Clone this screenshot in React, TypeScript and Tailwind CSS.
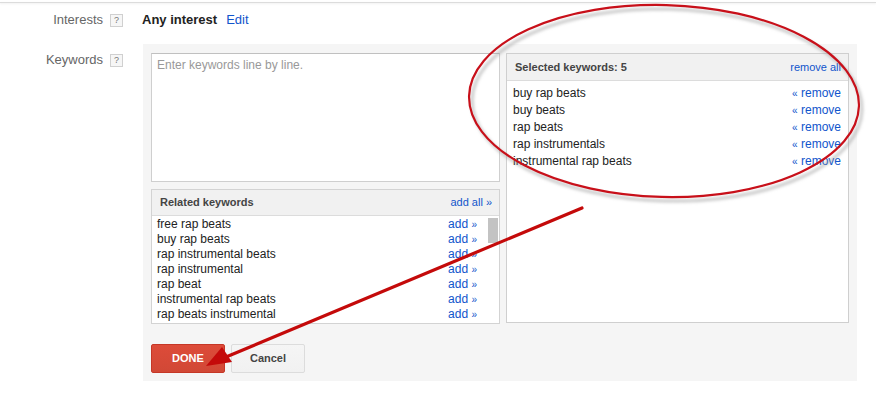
import React from "react";

const related = [
  "free rap beats",
  "buy rap beats",
  "rap instrumental beats",
  "rap instrumental",
  "rap beat",
  "instrumental rap beats",
  "rap beats instrumental",
  "rap beats for sale",
];

const selected = [
  "buy rap beats",
  "buy beats",
  "rap beats",
  "rap instrumentals",
  "instrumental rap beats",
];

function Help() {
  return (
    <div className="ml-[7px] flex h-[13px] w-[13px] items-center justify-center border border-[#d0d0d0] bg-[#f6f6f6] text-[9px] leading-none text-[#777]">
      ?
    </div>
  );
}

export default function App() {
  return (
    <div className="relative h-[399px] w-[876px] overflow-hidden bg-white font-['Liberation_Sans',Arial,sans-serif] text-[#222]">
      <div className="h-[2px]" />
      <div className="h-px bg-[#dcdcdc] shadow-[0_1px_2px_rgba(0,0,0,0.08)]" />

      {/* Interests row */}
      <div className="mt-[9px] flex h-[16px] items-center">
        <div className="w-[103px] text-right text-[13px] leading-[16px] text-[#666]">Interests</div>
        <Help />
        <div className="ml-[19px] text-[13px] font-bold leading-[16px] text-[#222]">Any interest</div>
        <div className="ml-[9px] text-[13px] leading-[16px] text-[#15c]">Edit</div>
      </div>

      {/* Keywords row */}
      <div className="mt-[16px] flex">
        <div className="mt-[8px] flex h-[16px] items-center">
          <div className="w-[103px] text-right text-[13px] leading-[16px] text-[#666]">Keywords</div>
          <Help />
        </div>
        <div className="ml-[20px] h-[337px] w-[714px] bg-[#f5f5f5] px-[8px] pt-[9px]">
          <div className="flex gap-[6px]">
            <div className="flex w-[349px] flex-col gap-[7px]">
              <div className="h-[129px] border border-[#cfcfcf] border-t-[#c0c0c0] bg-white px-[5px] pt-[4px] text-[12px] leading-[15px] text-[#999]">
                Enter keywords line by line.
              </div>
              <div className="flex h-[135px] flex-col border border-[#d3d3d3] bg-white">
                <div className="flex h-[26px] items-center justify-between border-b border-[#dcdcdc] bg-[#f1f1f1] pl-[8px] pr-[7px]">
                  <span className="text-[11px] font-bold text-[#444]">Related keywords</span>
                  <span className="text-[11px] text-[#15c]">add all »</span>
                </div>
                <div className="flex min-h-0 flex-1">
                  <div className="flex-1 overflow-hidden pl-[5px] pr-[11px] pt-px">
                    {related.map((k) => (
                      <div key={k} className="flex h-[15px] items-center justify-between text-[12px] leading-[15px]">
                        <span className="text-[#222]">{k}</span>
                        <span className="text-[#15c]">add <span className="text-[10px]">»</span></span>
                      </div>
                    ))}
                  </div>
                  <div className="w-[11px] bg-white pt-[2px] pr-[1px]">
                    <div className="h-[25px] w-[10px] bg-[#c3c3c3]" />
                  </div>
                </div>
              </div>
            </div>
            <div className="flex h-[270px] w-[343px] flex-col border border-[#cfcfcf] bg-white">
              <div className="flex h-[27px] items-center justify-between border-b border-[#dcdcdc] bg-[#f1f1f1] pl-[8px] pr-[7px]">
                <span className="text-[11px] font-bold text-[#444]">Selected keywords: 5</span>
                <span className="text-[11px] text-[#15c]">remove all</span>
              </div>
              <div className="pl-[6px] pr-[7px] pt-[4px]">
                {selected.map((k) => (
                  <div key={k} className="flex h-[17px] items-center justify-between text-[12px] leading-[17px]">
                    <span className="text-[#222]">{k}</span>
                    <span className="text-[#15c]"><span className="text-[10px]">«</span> remove</span>
                  </div>
                ))}
              </div>
            </div>
          </div>
          <div className="mt-[20px] flex gap-[6px]">
            <div className="flex h-[29px] w-[74px] items-center justify-center rounded-[2px] border border-[#c53727] bg-gradient-to-b from-[#dd4b39] to-[#d14836] text-[11px] font-bold text-white">
              DONE
            </div>
            <div className="flex h-[29px] w-[74px] items-center justify-center rounded-[2px] border border-[#dcdcdc] bg-gradient-to-b from-[#f5f5f5] to-[#f1f1f1] text-[11px] font-bold text-[#444]">
              Cancel
            </div>
          </div>
        </div>
      </div>

      {/* annotation overlay */}
      <svg className="pointer-events-none absolute left-0 top-0" width="876" height="399" viewBox="0 0 876 399">
        <defs>
          <filter id="blur" x="-10%" y="-10%" width="120%" height="120%">
            <feGaussianBlur stdDeviation="1.6" />
          </filter>
        </defs>
        <ellipse cx="667" cy="105" rx="195" ry="96" fill="none" stroke="#9a9a9a" strokeOpacity="0.55" strokeWidth="3" filter="url(#blur)" transform="rotate(1.5 667 105)" />
        <ellipse cx="664" cy="101" rx="195" ry="96" fill="none" stroke="#c8101a" strokeWidth="2.2" transform="rotate(1.5 664 101)" />
        <line x1="582" y1="208" x2="226" y2="357" stroke="#c40a0a" strokeWidth="3.2" strokeLinecap="round" />
        <polygon points="206,366 222,347 232,362" fill="#c40a0a" />
      </svg>
    </div>
  );
}
